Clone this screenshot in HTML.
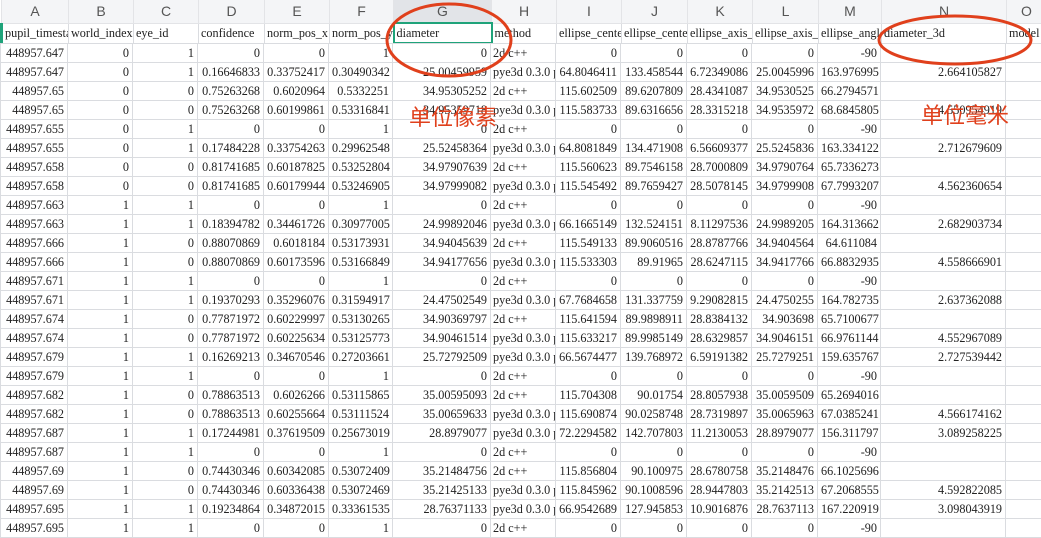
<!DOCTYPE html>
<html><head><meta charset="utf-8"><style>
body{margin:0;width:1041px;height:530px;overflow:hidden;background:#fff;position:relative}
table{border-collapse:collapse;table-layout:fixed;position:absolute;left:0;top:0;width:1045px}
td{border:1px solid #dadce0;height:18px;padding:0 3px;font:12.2px "Liberation Serif",serif;color:#222;text-align:right;white-space:nowrap;overflow:hidden;box-sizing:border-box}
tr.h td{height:23px;background:#f4f5f7;text-align:center;font:14px "Liberation Sans",sans-serif;color:#555;border-color:#e3e4e7;border-top:none}
tr.h td.sel{background:#e2e4e8}
tr.f td{height:20px;text-align:left;padding-left:2px;text-overflow:clip}
tr.d td{height:19px}
td.l{text-align:left;padding-left:2px}
.rt{position:absolute;color:#e0401c;font:22px "Liberation Sans","Noto Sans CJK SC",sans-serif}
</style></head><body>
<table>
<colgroup><col style="width:67px"><col style="width:65px"><col style="width:65px"><col style="width:66px"><col style="width:65px"><col style="width:64px"><col style="width:98px"><col style="width:65px"><col style="width:65px"><col style="width:66px"><col style="width:65px"><col style="width:66px"><col style="width:63px"><col style="width:125px"><col style="width:40px"></colgroup>
<tr class="h"><td>A</td><td>B</td><td>C</td><td>D</td><td>E</td><td>F</td><td class="sel">G</td><td>H</td><td>I</td><td>J</td><td>K</td><td>L</td><td>M</td><td>N</td><td>O</td></tr>
<tr class="f"><td style="border-left:3px solid #1fa37a">pupil_timestamp</td><td>world_index</td><td>eye_id</td><td>confidence</td><td>norm_pos_x</td><td>norm_pos_y</td><td style="border:2px solid #1fa37a">diameter</td><td>method</td><td>ellipse_center</td><td>ellipse_center</td><td>ellipse_axis_a</td><td>ellipse_axis_b</td><td>ellipse_angle</td><td>diameter_3d</td><td>model</td></tr>
</table>
<table style="top:43px">
<colgroup><col style="width:67px"><col style="width:65px"><col style="width:65px"><col style="width:66px"><col style="width:65px"><col style="width:64px"><col style="width:98px"><col style="width:65px"><col style="width:65px"><col style="width:66px"><col style="width:65px"><col style="width:66px"><col style="width:63px"><col style="width:125px"><col style="width:40px"></colgroup>
<tbody id="b"></tbody></table>
<script>
var R=`448957.647,0,1,0,0,1,0,2d c++,0,0,0,0,-90,
448957.647,0,1,0.16646833,0.33752417,0.30490342,25.00459959,P,64.8046411,133.458544,6.72349086,25.0045996,163.976995,2.664105827
448957.65,0,0,0.75263268,0.6020964,0.5332251,34.95305252,2d c++,115.602509,89.6207809,28.4341087,34.9530525,66.2794571,
448957.65,0,0,0.75263268,0.60199861,0.53316841,34.95359718,P,115.583733,89.6316656,28.3315218,34.9535972,68.6845805,4.550954919
448957.655,0,1,0,0,1,0,2d c++,0,0,0,0,-90,
448957.655,0,1,0.17484228,0.33754263,0.29962548,25.52458364,P,64.8081849,134.471908,6.56609377,25.5245836,163.334122,2.712679609
448957.658,0,0,0.81741685,0.60187825,0.53252804,34.97907639,2d c++,115.560623,89.7546158,28.7000809,34.9790764,65.7336273,
448957.658,0,0,0.81741685,0.60179944,0.53246905,34.97999082,P,115.545492,89.7659427,28.5078145,34.9799908,67.7993207,4.562360654
448957.663,1,1,0,0,1,0,2d c++,0,0,0,0,-90,
448957.663,1,1,0.18394782,0.34461726,0.30977005,24.99892046,P,66.1665149,132.524151,8.11297536,24.9989205,164.313662,2.682903734
448957.666,1,0,0.88070869,0.6018184,0.53173931,34.94045639,2d c++,115.549133,89.9060516,28.8787766,34.9404564,64.611084,
448957.666,1,0,0.88070869,0.60173596,0.53166849,34.94177656,P,115.533303,89.91965,28.6247115,34.9417766,66.8832935,4.558666901
448957.671,1,1,0,0,1,0,2d c++,0,0,0,0,-90,
448957.671,1,1,0.19370293,0.35296076,0.31594917,24.47502549,P,67.7684658,131.337759,9.29082815,24.4750255,164.782735,2.637362088
448957.674,1,0,0.77871972,0.60229997,0.53130265,34.90369797,2d c++,115.641594,89.9898911,28.8384132,34.903698,65.7100677,
448957.674,1,0,0.77871972,0.60225634,0.53125773,34.90461514,P,115.633217,89.9985149,28.6329857,34.9046151,66.9761144,4.552967089
448957.679,1,1,0.16269213,0.34670546,0.27203661,25.72792509,P,66.5674477,139.768972,6.59191382,25.7279251,159.635767,2.727539442
448957.679,1,1,0,0,1,0,2d c++,0,0,0,0,-90,
448957.682,1,0,0.78863513,0.6026266,0.53115865,35.00595093,2d c++,115.704308,90.01754,28.8057938,35.0059509,65.2694016,
448957.682,1,0,0.78863513,0.60255664,0.53111524,35.00659633,P,115.690874,90.0258748,28.7319897,35.0065963,67.0385241,4.566174162
448957.687,1,1,0.17244981,0.37619509,0.25673019,28.8979077,P,72.2294582,142.707803,11.2130053,28.8979077,156.311797,3.089258225
448957.687,1,1,0,0,1,0,2d c++,0,0,0,0,-90,
448957.69,1,0,0.74430346,0.60342085,0.53072409,35.21484756,2d c++,115.856804,90.100975,28.6780758,35.2148476,66.1025696,
448957.69,1,0,0.74430346,0.60336438,0.53072469,35.21425133,P,115.845962,90.1008596,28.9447803,35.2142513,67.2068555,4.592822085
448957.695,1,1,0.19234864,0.34872015,0.33361535,28.76371133,P,66.9542689,127.945853,10.9016876,28.7637113,167.220919,3.098043919
448957.695,1,1,0,0,1,0,2d c++,0,0,0,0,-90,`;
var h='';R.split('\n').forEach(function(l){var c=l.split(',');h+='<tr class="d">';for(var i=0;i<15;i++){var v=c[i]||'';if(i==7){h+='<td class="l">'+(v=='P'?'pye3d 0.3.0 post':v)+'</td>';}else h+='<td>'+v+'</td>';}h+='</tr>';});
document.getElementById('b').innerHTML=h;
</script>
<svg width="1041" height="530" style="position:absolute;left:0;top:0">
<ellipse cx="449" cy="40" rx="62" ry="36" fill="none" stroke="#e0401c" stroke-width="3"/>
<ellipse cx="955" cy="40" rx="76" ry="24" fill="none" stroke="#e0401c" stroke-width="3"/>
</svg>
<div class="rt" style="left:409px;top:100px">单位像素</div>
<div class="rt" style="left:921px;top:98px">单位毫米</div>
</body></html>
